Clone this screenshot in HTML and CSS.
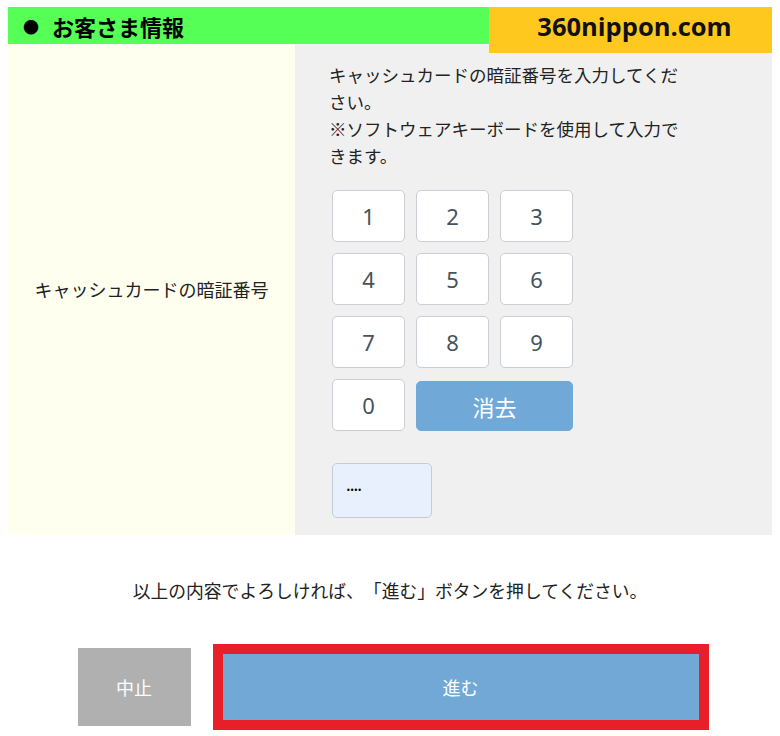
FILE: index.html
```html
<!DOCTYPE html>
<html lang="ja">

<head>
    <meta charset="UTF-8">
    <meta name="viewport" content="width=device-width, initial-scale=1.0">
    <title>お客さま情報</title>

    <link rel="stylesheet" href="styles.css">
</head>

<body>
    <div class="logo">360nippon.com</div>

    <h2 class="section-title"><span class="dot">●</span>お客さま情報</h2>

    <div class="form-table">
        <div class="label-cell">キャッシュカードの暗証番号</div>
        <div class="input-cell">
            <p class="note">キャッシュカードの暗証番号を入力してください。<br>※ソフトウェアキーボードを使用して入力できます。</p>

            <div class="keypad">
                <button class="key">1</button>
                <button class="key">2</button>
                <button class="key">3</button>
                <button class="key">4</button>
                <button class="key">5</button>
                <button class="key">6</button>
                <button class="key">7</button>
                <button class="key">8</button>
                <button class="key">9</button>
                <button class="key">0</button>
                <button class="key clear">消去</button>
            </div>

            <div class="pin-box">••••</div>
        </div>
    </div>

    <p class="confirm">以上の内容でよろしければ、「進む」ボタンを押してください。</p>

    <div class="actions">
        <button class="btn cancel">中止</button>
        <div class="next-frame">
            <button class="btn next">進む</button>
        </div>
    </div>
</body>

</html>
```

FILE: styles.css
```css
* {
    box-sizing: border-box;
}

body {
    margin: 7px 8px 8px;
    background-color: #fff;
    color: #222;
    font-family: "Noto Sans CJK JP", "Noto Sans", sans-serif;
    text-spacing-trim: space-all;
    position: relative;
}

.logo {
    position: absolute;
    top: -7px;
    right: -8px;
    width: 291px;
    height: 53px;
    background-color: #ffc81e;
    color: #111;
    font-family: "Open Sans", "Noto Sans", sans-serif;
    font-weight: bold;
    font-size: 25.5px;
    display: flex;
    align-items: center;
    justify-content: center;
    padding-bottom: 2px;
}

.section-title {
    margin: 0;
    height: 37px;
    background-color: #55ff55;
    color: #000;
    font-size: 22px;
    font-weight: bold;
    display: flex;
    align-items: center;
    padding-left: 15px;
}

.section-title .dot {
    font-size: 16px;
    margin-right: 13px;
}

.form-table {
    display: grid;
    grid-template-columns: 287px 1fr;
}

.label-cell {
    background-color: #fffff0;
    display: flex;
    align-items: center;
    justify-content: center;
    font-size: 18px;
    padding-bottom: 2px;
}

.input-cell {
    background-color: #f0f0f0;
    padding: 17px 34px 17px 34px;
}

.note {
    margin: 0 0 21px;
    max-width: 362px;
    font-size: 17.5px;
    line-height: 27px;
    color: #222;
}

.keypad {
    display: grid;
    grid-template-columns: repeat(3, 73px);
    grid-auto-rows: 52px;
    gap: 11px;
    margin-left: 3px;
}

.key {
    font-family: "Noto Sans", "Open Sans", sans-serif;
    font-size: 22px;
    color: #46535c;
    background-color: #fff;
    border: 1px solid #c9cfd4;
    border-radius: 5px;
    padding: 0;
}

.key.clear {
    grid-column: span 2;
    background-color: #70a8d8;
    border-color: #70a8d8;
    color: #fff;
    font-family: "Noto Sans CJK JP", sans-serif;
    margin-top: 2px;
}

.pin-box {
    margin: 32px 0 0 3px;
    width: 100px;
    height: 55px;
    background-color: #e8f0fd;
    border: 1px solid #c3ccd6;
    border-radius: 5px;
    padding-left: 13px;
    display: flex;
    align-items: center;
    font-family: "DejaVu Sans", sans-serif;
    font-size: 8px;
    letter-spacing: -1px;
    color: #000;
}

.confirm {
    margin: 40px 0 0;
    text-align: center;
    font-size: 17.8px;
    line-height: 30px;
    color: #222;
}

.actions {
    display: flex;
    justify-content: center;
    align-items: center;
    gap: 22px;
    margin-top: 39px;
    padding-left: 6px;
}

.btn {
    border: none;
    color: #fff;
    font-family: "Noto Sans CJK JP", sans-serif;
    font-size: 18px;
    padding: 0;
}

.cancel {
    width: 113px;
    height: 78px;
    background-color: #b0b0b0;
}

.next-frame {
    border: 10px solid #e81e28;
}

.next {
    display: block;
    width: 476px;
    height: 66px;
    background-color: #72a8d6;
}
```
